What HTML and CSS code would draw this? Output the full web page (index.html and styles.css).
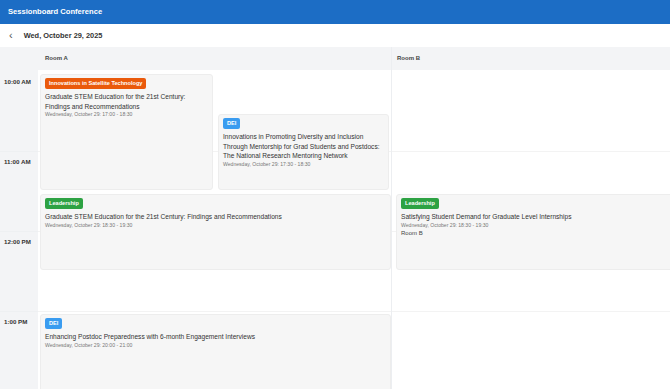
FILE: index.html
```html
<!DOCTYPE html>
<html>
<head>
  <title>Sessionboard Conference</title>
  <link rel="stylesheet" href="styles.css">
</head>
<body>
    <header class="topbar">Sessionboard Conference</header>
    <div class="datebar">
        <span class="back">&lsaquo;</span>
        <span class="date">Wed, October 29, 2025</span>
    </div>
    <div class="schedule">
        <div class="head corner"></div>
        <div class="head">Room A</div>
        <div class="head room-b">Room B</div>

        <div class="times">
            <div class="slot">10:00 AM</div>
            <div class="slot">11:00 AM</div>
            <div class="slot">12:00 PM</div>
            <div class="slot">1:00 PM</div>
        </div>

        <div class="room">
            <div class="hour"></div>
            <div class="hour"></div>
            <div class="hour"></div>
            <div class="hour"></div>

            <div class="session" style="top: 4px; left: 2px; width: 173px; height: 116px;">
                <span class="tag orange">Innovations in Satellite Technology</span>
                <div class="title">Graduate STEM Education for the 21st Century:<br>Findings and Recommendations</div>
                <div class="when">Wednesday, October 29: 17:00 - 18:30</div>
            </div>
            <div class="session" style="top: 44px; left: 180px; width: 171px; height: 76px;">
                <span class="tag blue">DEI</span>
                <div class="title">Innovations in Promoting Diversity and Inclusion<br>Through Mentorship for Grad Students and Postdocs:<br>The National Research Mentoring Network</div>
                <div class="when">Wednesday, October 29: 17:30 - 18:30</div>
            </div>
            <div class="session" style="top: 124px; left: 2px; width: 351px; height: 76px;">
                <span class="tag green">Leadership</span>
                <div class="title">Graduate STEM Education for the 21st Century: Findings and Recommendations</div>
                <div class="when">Wednesday, October 29: 18:30 - 19:30</div>
            </div>
            <div class="session" style="top: 244px; left: 2px; width: 351px; height: 90px;">
                <span class="tag blue">DEI</span>
                <div class="title">Enhancing Postdoc Preparedness with 6-month Engagement Interviews</div>
                <div class="when">Wednesday, October 29: 20:00 - 21:00</div>
            </div>
        </div>

        <div class="room room-b">
            <div class="hour"></div>
            <div class="hour"></div>
            <div class="hour"></div>
            <div class="hour"></div>

            <div class="session" style="top: 124px; left: 4px; width: 300px; height: 76px;">
                <span class="tag green">Leadership</span>
                <div class="title">Satisfying Student Demand for Graduate Level Internships</div>
                <div class="when">Wednesday, October 29: 18:30 - 19:30</div>
                <div class="where">Room B</div>
            </div>
        </div>
    </div>
</body>
</html>
```

FILE: styles.css
```css
/* Page */
body {
    margin: 0;
    font-family: 'Liberation Sans', Arial, sans-serif;
    background-color: #ffffff;
    color: #333;
    overflow: hidden;
}

/* Blue title bar */
.topbar {
    height: 24px;
    line-height: 24px;
    padding-left: 8px;
    background-color: #1c6dc5;
    color: #fff;
    font-size: 7.6px;
    font-weight: bold;
}

/* Day selector */
.datebar {
    display: flex;
    align-items: center;
    height: 23px;
    padding-left: 9px;
    gap: 11px;
}

.back {
    font-size: 11px;
    color: #555;
    margin-top: -2px;
}

.date {
    font-size: 7.4px;
    font-weight: bold;
    color: #333;
}

/* Schedule grid */
.schedule {
    display: grid;
    grid-template-columns: 38px 353px 1fr;
}

.head {
    height: 23px;
    line-height: 23px;
    padding-left: 7px;
    background-color: #f3f4f6;
    font-size: 6px;
    font-weight: bold;
    color: #444;
}

.head.room-b {
    padding-left: 5px;
    border-left: 1px solid #eceef1;
}

.times {
    background-color: #f3f4f6;
    padding-top: 2px;
}

.slot {
    height: 80px;
    box-sizing: border-box;
    padding: 6px 0 0 4px;
    font-size: 6.2px;
    font-weight: bold;
    color: #333;
    border-bottom: 1px solid #eef0f2;
}

.room {
    position: relative;
    padding-top: 2px;
}

.room.room-b {
    border-left: 1px solid #eceef1;
}

.hour {
    height: 80px;
    box-sizing: border-box;
    border-bottom: 1px solid #f3f3f3;
}

/* Session cards */
.session {
    position: absolute;
    box-sizing: border-box;
    display: flex;
    flex-direction: column;
    align-items: flex-start;
    padding: 3px 4px;
    background-color: #f6f6f6;
    border: 1px solid #ededed;
    border-radius: 3px;
}

.tag {
    height: 11px;
    line-height: 11px;
    padding: 0 4px;
    border-radius: 2px;
    color: #fff;
    font-size: 5.6px;
    font-weight: bold;
    margin-bottom: 3px;
}

.tag.orange { background-color: #ea5a0c; }
.tag.blue { background-color: #3a9cf0; }
.tag.green { background-color: #2da243; }

.title {
    font-size: 6.6px;
    line-height: 9.5px;
    color: #333;
    white-space: nowrap;
}

.when {
    font-size: 5.1px;
    line-height: 7px;
    color: #777;
}

.where {
    font-size: 6px;
    line-height: 9px;
    color: #444;
}
```
